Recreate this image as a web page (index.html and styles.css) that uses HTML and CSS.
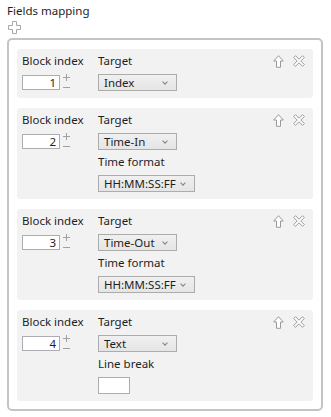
FILE: index.html
```html
<!DOCTYPE html>
<html lang="en">
<head>
    <meta charset="UTF-8">
    <title>Fields mapping</title>
    <link rel="stylesheet" href="styles.css">
</head>
<body>
    <div class="title">Fields mapping</div>
    <button class="add-btn" title="Add field">
        <svg width="13" height="13" viewBox="0 0 13 13"><path d="M4.5 0.5h4v4h4v4h-4v4h-4v-4h-4v-4h4z" fill="#fff" stroke="#a8a8a8"/></svg>
    </button>

    <div class="panel">
        <div class="block">
            <div class="index-col">
                <div class="label">Block index</div>
                <div class="spinner">
                    <input class="num" type="text" value="1">
                    <div class="spin-btns">
                        <svg width="7" height="7" viewBox="0 0 7 7"><path d="M3.5 0v7M0 3.5h7" stroke="#a0a0a0"/></svg>
                        <svg width="7" height="7" viewBox="0 0 7 7"><path d="M0 3.5h7" stroke="#a0a0a0"/></svg>
                    </div>
                </div>
            </div>
            <div class="target-col">
                <div class="field">
                    <div class="label">Target</div>
                    <div class="select">Index<span class="caret"></span></div>
                </div>
            </div>
            <div class="tools">
                <svg width="11" height="13" viewBox="0 0 11 13"><path d="M5.5 0.7l4.8 5.3h-2.8v6.3h-4v-6.3h-2.8z" fill="#fff" stroke="#9a9a9a"/></svg>
                <svg width="12" height="12" viewBox="0 0 12 12"><path d="M2.5 0.7l3.5 3.5l3.5-3.5l1.8 1.8l-3.5 3.5l3.5 3.5l-1.8 1.8l-3.5-3.5l-3.5 3.5l-1.8-1.8l3.5-3.5l-3.5-3.5z" fill="#fff" stroke="#9a9a9a"/></svg>
            </div>
        </div>

        <div class="block">
            <div class="index-col">
                <div class="label">Block index</div>
                <div class="spinner">
                    <input class="num" type="text" value="2">
                    <div class="spin-btns">
                        <svg width="7" height="7" viewBox="0 0 7 7"><path d="M3.5 0v7M0 3.5h7" stroke="#a0a0a0"/></svg>
                        <svg width="7" height="7" viewBox="0 0 7 7"><path d="M0 3.5h7" stroke="#a0a0a0"/></svg>
                    </div>
                </div>
            </div>
            <div class="target-col">
                <div class="field">
                    <div class="label">Target</div>
                    <div class="select">Time-In<span class="caret"></span></div>
                </div>
                <div class="field">
                    <div class="label">Time format</div>
                    <div class="select wide">HH:MM:SS:FF<span class="caret"></span></div>
                </div>
            </div>
            <div class="tools">
                <svg width="11" height="13" viewBox="0 0 11 13"><path d="M5.5 0.7l4.8 5.3h-2.8v6.3h-4v-6.3h-2.8z" fill="#fff" stroke="#9a9a9a"/></svg>
                <svg width="12" height="12" viewBox="0 0 12 12"><path d="M2.5 0.7l3.5 3.5l3.5-3.5l1.8 1.8l-3.5 3.5l3.5 3.5l-1.8 1.8l-3.5-3.5l-3.5 3.5l-1.8-1.8l3.5-3.5l-3.5-3.5z" fill="#fff" stroke="#9a9a9a"/></svg>
            </div>
        </div>

        <div class="block">
            <div class="index-col">
                <div class="label">Block index</div>
                <div class="spinner">
                    <input class="num" type="text" value="3">
                    <div class="spin-btns">
                        <svg width="7" height="7" viewBox="0 0 7 7"><path d="M3.5 0v7M0 3.5h7" stroke="#a0a0a0"/></svg>
                        <svg width="7" height="7" viewBox="0 0 7 7"><path d="M0 3.5h7" stroke="#a0a0a0"/></svg>
                    </div>
                </div>
            </div>
            <div class="target-col">
                <div class="field">
                    <div class="label">Target</div>
                    <div class="select">Time-Out<span class="caret"></span></div>
                </div>
                <div class="field">
                    <div class="label">Time format</div>
                    <div class="select wide">HH:MM:SS:FF<span class="caret"></span></div>
                </div>
            </div>
            <div class="tools">
                <svg width="11" height="13" viewBox="0 0 11 13"><path d="M5.5 0.7l4.8 5.3h-2.8v6.3h-4v-6.3h-2.8z" fill="#fff" stroke="#9a9a9a"/></svg>
                <svg width="12" height="12" viewBox="0 0 12 12"><path d="M2.5 0.7l3.5 3.5l3.5-3.5l1.8 1.8l-3.5 3.5l3.5 3.5l-1.8 1.8l-3.5-3.5l-3.5 3.5l-1.8-1.8l3.5-3.5l-3.5-3.5z" fill="#fff" stroke="#9a9a9a"/></svg>
            </div>
        </div>

        <div class="block">
            <div class="index-col">
                <div class="label">Block index</div>
                <div class="spinner">
                    <input class="num" type="text" value="4">
                    <div class="spin-btns">
                        <svg width="7" height="7" viewBox="0 0 7 7"><path d="M3.5 0v7M0 3.5h7" stroke="#a0a0a0"/></svg>
                        <svg width="7" height="7" viewBox="0 0 7 7"><path d="M0 3.5h7" stroke="#a0a0a0"/></svg>
                    </div>
                </div>
            </div>
            <div class="target-col">
                <div class="field">
                    <div class="label">Target</div>
                    <div class="select">Text<span class="caret"></span></div>
                </div>
                <div class="field">
                    <div class="label">Line break</div>
                    <input class="text-box" type="text">
                </div>
            </div>
            <div class="tools">
                <svg width="11" height="13" viewBox="0 0 11 13"><path d="M5.5 0.7l4.8 5.3h-2.8v6.3h-4v-6.3h-2.8z" fill="#fff" stroke="#9a9a9a"/></svg>
                <svg width="12" height="12" viewBox="0 0 12 12"><path d="M2.5 0.7l3.5 3.5l3.5-3.5l1.8 1.8l-3.5 3.5l3.5 3.5l-1.8 1.8l-3.5-3.5l-3.5 3.5l-1.8-1.8l3.5-3.5l-3.5-3.5z" fill="#fff" stroke="#9a9a9a"/></svg>
            </div>
        </div>
    </div>
</body>
</html>
```

FILE: styles.css
```css
* {
    margin: 0;
    padding: 0;
    box-sizing: border-box;
    font-family: 'Segoe UI', 'Noto Sans', sans-serif;
}

body {
    background-color: #ffffff;
    color: #1e1e1e;
    font-size: 11.5px;
    padding: 3px 7px;
}

.title {
    line-height: 16px;
}

.add-btn {
    display: block;
    background: none;
    border: none;
    margin: 2px 0 0 1px;
    width: 13px;
    height: 13px;
}

.add-btn svg {
    display: block;
}

.panel {
    margin-top: 4px;
    width: 316px;
    border: 2px solid #c4c4c4;
    border-radius: 5px;
    padding: 9px 8px 8px 8px;
    display: flex;
    flex-direction: column;
    gap: 10px;
}

.block {
    background-color: #f2f2f2;
    border-radius: 3px;
    padding: 4px 8px 7px 5px;
    display: flex;
    align-items: flex-start;
}

.label {
    line-height: 16px;
    margin-bottom: 5px;
    white-space: nowrap;
}

.index-col {
    width: 76px;
}

.spinner {
    display: flex;
    align-items: flex-start;
}

.num {
    width: 38px;
    height: 15px;
    margin-top: 1px;
    border: 1px solid #abadb3;
    background: #fff;
    text-align: right;
    padding-right: 3px;
    font-size: 11.5px;
    line-height: 13px;
    color: #1e1e1e;
}

.spin-btns {
    display: flex;
    flex-direction: column;
    gap: 3px;
    margin-left: 3px;
}

.spin-btns svg {
    display: block;
}

.target-col {
    display: flex;
    flex-direction: column;
    gap: 4px;
}

.select {
    width: 79px;
    height: 17px;
    border: 1px solid #acacac;
    background: linear-gradient(#f0f0f0, #e5e5e5);
    padding-left: 5px;
    line-height: 15px;
    position: relative;
    white-space: nowrap;
}

.select.wide {
    width: 97px;
}

.caret {
    position: absolute;
    right: 9px;
    top: 5px;
    width: 4px;
    height: 4px;
    border-right: 1px solid #808080;
    border-bottom: 1px solid #808080;
    transform: rotate(45deg);
}

.text-box {
    width: 32px;
    height: 17px;
    border: 1px solid #abadb3;
    background: #fff;
}

.tools {
    margin-left: auto;
    display: flex;
    gap: 9px;
    padding-top: 2px;
}

.tools svg {
    display: block;
}
```
